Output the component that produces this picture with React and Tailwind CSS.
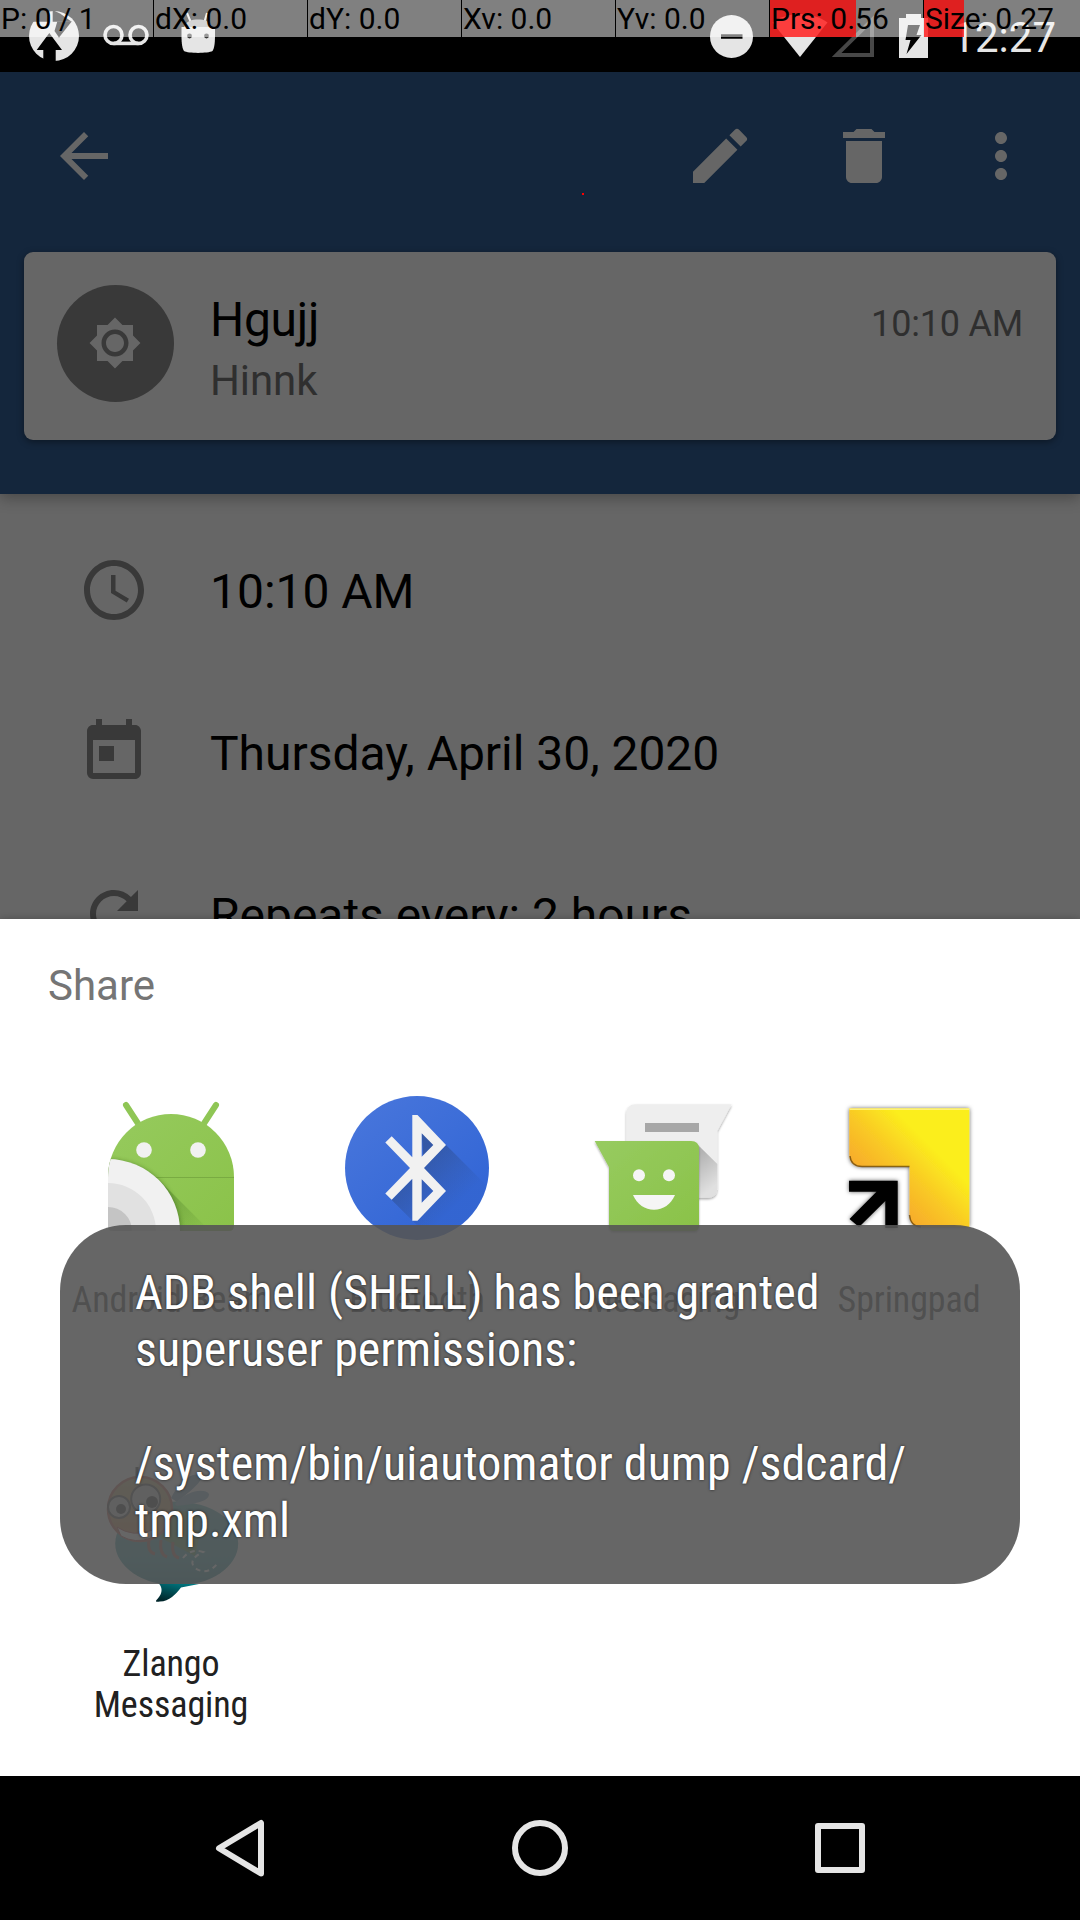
import {
  MdArrowBack,
  MdEdit,
  MdDelete,
  MdMoreVert,
  MdBrightnessHigh,
  MdSchedule,
  MdToday,
  MdRefresh,
} from "react-icons/md";

const pointerCells = [
  { label: "P: 0 / 1", fill: 0 },
  { label: "dX: 0.0", fill: 0 },
  { label: "dY: 0.0", fill: 0 },
  { label: "Xv: 0.0", fill: 0 },
  { label: "Yv: 0.0", fill: 0 },
  { label: "Prs: 0.56", fill: 86 },
  { label: "Size: 0.27", fill: 40 },
];

function PointerBar() {
  return (
    <div className="absolute left-0 top-0 z-20 flex h-[37px] w-[1080px]">
      {pointerCells.map((c, i) => (
        <div
          key={c.label}
          className={"relative h-full shrink-0 bg-white/50 " + (i === 6 ? "w-[156px]" : "mr-px w-[153px]")}
        >
          <div className="h-full bg-[rgba(255,0,0,0.75)]" style={{ width: c.fill }} />
          <span className="absolute left-px top-0 whitespace-pre text-[30px] leading-[37px] text-black">
            {c.label}
          </span>
        </div>
      ))}
    </div>
  );
}

function StatusBar() {
  return (
    <div className="flex h-[72px] shrink-0 items-start bg-black text-[#e5e5e5]">
      <svg className="ml-[29px] h-[72px] w-[50px]" viewBox="29 0 50 72">
        <circle cx="54" cy="36" r="25" fill="#e5e5e5" />
        <path d="M48.300 10V21.700H31L36 13Z" fill="#000" />
        <path d="M52.700 10V21.700H71.700L60 13.500Z" fill="#000" />
        <path d="M57.300 21.500H71.700L59 37.500L54.500 31Z" fill="#000" />
        <path d="M49.300 33L62 50H55.700V62H43.300V50H36.700Z" fill="#000" />
      </svg>
      <svg className="ml-[24px] h-[72px] w-[46px]" viewBox="103 0 46 72" fill="none" stroke="#e5e5e5" strokeWidth="3.600">
        <circle cx="113.500" cy="35" r="8.500" />
        <circle cx="138.500" cy="35" r="8.500" />
        <path d="M113.500 43.400H138.500" />
      </svg>
      <svg className="ml-[31px] h-[72px] w-[36px]" viewBox="180 0 36 72">
        <path d="M187 13L190.500 21.500M207 13L204.500 21.500" stroke="#e5e5e5" strokeWidth="2" />
        <path d="M184 27C186 21 192 19.500 198 19.500S210 21 212 27Z" fill="#a8a8a8" />
        <path d="M181.500 27H215V36C215 44 214 49 212.500 51C208 53.500 188 53.500 184 51C182.500 49 181.500 44 181.500 36Z" fill="#e5e5e5" />
        <circle cx="189.500" cy="36" r="2.400" fill="#333" />
        <circle cx="206.500" cy="36" r="2.400" fill="#333" />
      </svg>
      <svg className="ml-[494px] h-[72px] w-[43px]" viewBox="710 0 43 72">
        <circle cx="731.500" cy="36.500" r="21.500" fill="#e5e5e5" />
        <path d="M721 36.500H742.500" stroke="#000" strokeWidth="4.500" />
      </svg>
      <svg className="ml-[19px] h-[72px] w-[56px]" viewBox="772 0 56 72">
        <path d="M772.500 22.500C788 11 812 11 827.500 22.500L800 57Z" fill="#e5e5e5" />
      </svg>
      <svg className="ml-[4px] h-[72px] w-[44px]" viewBox="832 0 44 72">
        <path d="M836.500 55H872V20Z" fill="none" stroke="#474747" strokeWidth="4" />
      </svg>
      <svg className="ml-[23px] h-[72px] w-[29px]" viewBox="899 0 29 72">
        <path d="M899 18H906V14H921V18H928V58H899Z" fill="#e5e5e5" />
        <path d="M908 25H920L916.500 35H921.500L906.500 54L910.500 40H905.500Z" fill="#000" />
      </svg>
      <div className="ml-auto mr-[24px] pt-[2px] text-[42px] leading-[72px]">12:27</div>
    </div>
  );
}

function Header() {
  return (
    <div className="relative z-10 h-[422px] shrink-0 bg-[#14263c] shadow-[0_4px_14px_rgba(0,0,0,0.3)]">
      <div className="flex h-[168px] items-center text-[72px] text-[#666]">
        <MdArrowBack className="ml-[48px]" />
        <MdEdit className="ml-auto mr-[72px]" />
        <MdDelete className="mr-[65px]" />
        <MdMoreVert className="mr-[43px]" />
      </div>
      <div className="mx-6 mt-3 flex h-[188px] rounded-[9px] bg-[#666] shadow-[0_2px_7px_rgba(0,0,0,0.4)]">
        <div className="ml-[33px] mt-[33px] flex h-[117px] w-[117px] items-center justify-center rounded-full bg-[#393939] pb-[2px] pr-[2px] text-[54px] text-[#666]">
          <MdBrightnessHigh />
        </div>
        <div className="ml-[36px] pt-[38px]">
          <div className="text-[48px] leading-[60px] tracking-[-0.3px] text-black">Hgujj</div>
          <div className="pt-px text-[42px] leading-[60px] tracking-[-0.1px] text-[#2f2f2f]">Hinnk</div>
        </div>
        <div className="ml-auto mr-[33px] pt-[42px] text-[36px] leading-[60px] tracking-[-0.2px] text-[#2f2f2f]">
          10:10 AM
        </div>
      </div>
    </div>
  );
}

function DetailRow({ icon: Icon, children }) {
  return (
    <div className="flex h-[162px] shrink-0 items-center">
      <Icon className="ml-[78px] text-[72px] text-[#393939]" />
      <span className="ml-[60px] pt-1 text-[48px] leading-[56px] tracking-[-0.03px] text-black">{children}</span>
    </div>
  );
}

function BeamIcon() {
  return (
    <svg className="h-[144px] w-[144px]" viewBox="0 0 144 144">
      <defs>
        <linearGradient id="beamGreen" x1="0" y1="0" x2="1" y2="1">
          <stop offset="0" stopColor="#97cb60" />
          <stop offset="1" stopColor="#8ac248" />
        </linearGradient>
        <linearGradient id="beamShade" gradientUnits="userSpaceOnUse" x1="60" y1="90" x2="104" y2="134">
          <stop offset="0" stopColor="#3d6b1f" stopOpacity="0.4" />
          <stop offset="1" stopColor="#3d6b1f" stopOpacity="0.04" />
        </linearGradient>
        <clipPath id="beamBody">
          <path d="M9 81A63 63 0 0 1 135 81V130Q135 135 130 135H14Q9 135 9 130Z" />
        </clipPath>
        <filter id="beamBlur" x="-20%" y="-20%" width="140%" height="140%">
          <feGaussianBlur stdDeviation="2.200" />
        </filter>
      </defs>
      <path d="M27 9L40 29M117 9L104 29" stroke="#8fc655" strokeWidth="6" strokeLinecap="round" />
      <g clipPath="url(#beamBody)">
        <rect width="144" height="144" fill="url(#beamGreen)" />
        <path d="M9 81.500H135" stroke="#79ab42" strokeWidth="1.200" />
        <path d="M60 84L120 144H40Z" fill="url(#beamShade)" />
        <circle cx="9.500" cy="136" r="72.500" fill="#3d6b1f" opacity="0.6" filter="url(#beamBlur)" />
        <circle cx="9" cy="135" r="72" fill="#f1f1f1" />
        <circle cx="9" cy="135" r="48" fill="#e1e1e1" />
        <circle cx="9" cy="135" r="24" fill="#c4c4c4" />
      </g>
      <circle cx="45" cy="54" r="7.800" fill="#f1f1f1" />
      <circle cx="99" cy="54" r="7.800" fill="#f1f1f1" />
    </svg>
  );
}

function BluetoothIcon() {
  return (
    <svg className="h-[144px] w-[144px]" viewBox="0 0 144 144">
      <defs>
        <linearGradient id="btBlue" x1="0.100" y1="0.100" x2="0.700" y2="0.800">
          <stop offset="0" stopColor="#4775db" />
          <stop offset="1" stopColor="#3467d6" />
        </linearGradient>
        <linearGradient id="btShade" gradientUnits="userSpaceOnUse" x1="66" y1="66" x2="110" y2="110">
          <stop offset="0" stopColor="#263a60" stopOpacity="0.42" />
          <stop offset="0.550" stopColor="#263a60" stopOpacity="0.2" />
          <stop offset="1" stopColor="#263a60" stopOpacity="0.04" />
        </linearGradient>
        <clipPath id="btClip">
          <circle cx="72" cy="72" r="72" />
        </clipPath>
      </defs>
      <circle cx="72" cy="72" r="72" fill="url(#btBlue)" />
      <path
        clipPath="url(#btClip)"
        d="M76.700 37.300L101 49L154 102V160H103L46.700 104L67.300 83L79 72Z"
        fill="url(#btShade)"
      />
      <path
        fill="#f1f1f1"
        fillRule="evenodd"
        d="M67.300 19H72.500L101 49L79 72L101 95L72.500 124.700H67.300V82.700L46.700 103.700L40.300 97.500L65 72L40.300 46.500L46.700 40.300L67.300 61.300ZM76.700 37.300V60.700L88.300 49ZM76.700 83.300V106.700L88.300 95Z"
      />
    </svg>
  );
}

function MessagingIcon() {
  return (
    <svg className="h-[144px] w-[144px]" viewBox="0 0 144 144">
      <defs>
        <linearGradient id="msgGreen" x1="0" y1="0" x2="1" y2="1">
          <stop offset="0" stopColor="#97cb60" />
          <stop offset="1" stopColor="#8ac248" />
        </linearGradient>
        <linearGradient id="msgShade" gradientUnits="userSpaceOnUse" x1="106" y1="60" x2="128" y2="86">
          <stop offset="0" stopColor="#000" stopOpacity="0.25" />
          <stop offset="1" stopColor="#000" stopOpacity="0.06" />
        </linearGradient>
        <filter id="msgShadow" x="-10%" y="-10%" width="120%" height="125%">
          <feDropShadow dx="0" dy="1.500" stdDeviation="1.200" floodOpacity="0.35" />
        </filter>
      </defs>
      <path
        filter="url(#msgShadow)"
        d="M45 8.300H140.700L126.300 35V92Q126.300 101.700 117 101.700H45Q35.300 101.700 35.300 92V18Q35.300 8.300 45 8.300Z"
        fill="#eee"
      />
      <rect x="54" y="27" width="54" height="9" fill="#a7a7a7" />
      <path d="M106 48L126.300 68V92Q126.300 101.700 117 101.700H106Z" fill="url(#msgShade)" />
      <path
        filter="url(#msgShadow)"
        d="M3.700 45H100Q108 45 108 53V130Q108 135 103 135H23Q18 135 18 130V71.300Z"
        fill="url(#msgGreen)"
      />
      <circle cx="48" cy="79.300" r="6" fill="#f5f5f5" />
      <circle cx="78" cy="79.300" r="6" fill="#f5f5f5" />
      <path d="M42 99H84C80 108.500 72 113.700 63 113.700S46 108.500 42 99Z" fill="#f5f5f5" />
    </svg>
  );
}

function SpringpadIcon() {
  return (
    <svg className="h-[144px] w-[144px]" viewBox="0 0 144 144">
      <defs>
        <linearGradient id="spYellow" gradientUnits="userSpaceOnUse" x1="36" y1="92" x2="86" y2="42">
          <stop offset="0" stopColor="#f7a92c" />
          <stop offset="0.500" stopColor="#f9c825" />
          <stop offset="1" stopColor="#fbee1d" />
        </linearGradient>
        <filter id="spShadow" x="-15%" y="-15%" width="130%" height="130%">
          <feDropShadow dx="0" dy="0" stdDeviation="2.200" floodOpacity="0.65" />
        </filter>
      </defs>
      <path
        filter="url(#spShadow)"
        d="M12.300 12.500H132.300V131H84Q72.500 131 72.500 119V71H25Q12.300 70.500 12.300 58Z"
        fill="url(#spYellow)"
      />
      <path d="M13 60Q14 70.500 25 70.500H72.500M72.500 119Q73.500 130.500 84 131" fill="none" stroke="#5a3a08" strokeOpacity="0.7" strokeWidth="1.400" />
      <path d="M12.500 13.200H132" stroke="#fff27a" strokeWidth="1.500" />
      <path
        filter="url(#spShadow)"
        d="M12 84.700H60.700V132H48.300V105L22 131L12.500 123L39.500 95.700H12Z"
        fill="#040606"
      />
    </svg>
  );
}

function ZlangoIcon() {
  return (
    <svg className="h-[144px] w-[144px]" viewBox="0 0 144 144">
      <defs>
        <linearGradient id="zlTeal" x1="0" y1="0" x2="0" y2="1">
          <stop offset="0" stopColor="#3aa0a8" />
          <stop offset="0.700" stopColor="#1c8c98" />
          <stop offset="1" stopColor="#006d78" />
        </linearGradient>
        <linearGradient id="zlTail" x1="0.800" y1="0" x2="0.300" y2="1">
          <stop offset="0" stopColor="#00818a" />
          <stop offset="1" stopColor="#00262b" />
        </linearGradient>
        <linearGradient id="zlHead" x1="0" y1="0" x2="0" y2="1">
          <stop offset="0" stopColor="#b5a560" />
          <stop offset="1" stopColor="#c8702c" />
        </linearGradient>
      </defs>
      <ellipse cx="77.700" cy="83.500" rx="61.500" ry="42" fill="url(#zlTeal)" />
      <path d="M58 122C66 128 62 136 57.500 140C56 142 58 142 61 141.500C70 141.500 77 134 82 127.500L100 124Z" fill="url(#zlTail)" />
      <path d="M72 38C80 22 94 10 102 16C104 22 90 32 78 42Z" fill="#5f8fb0" />
      <path d="M76 44C88 30 106 28 110 34C110 42 94 44 78 46Z" fill="#6f9fbc" />
      <path d="M60 50L104 52L92 70L102 70L96 96L62 78Z" fill="#3f8a3f" />
      <path d="M50 80Q48 92 56 94M62 80Q60 94 68 97M74 82Q72 96 80 98" fill="none" stroke="#a04538" strokeWidth="3" />
      <circle cx="41" cy="49" r="32" fill="url(#zlHead)" stroke="#b84a38" strokeWidth="2.500" />
      <path d="M38 18V7" stroke="#222" strokeWidth="3" />
      <circle cx="20" cy="47" r="11" fill="#c4c4c4" stroke="#333" strokeWidth="2" />
      <circle cx="46.700" cy="39" r="14.500" fill="#c4c4c4" stroke="#333" strokeWidth="2" />
      <circle cx="22" cy="49" r="5" fill="#111" />
      <circle cx="53" cy="42" r="6" fill="#111" />
      <path d="M18 67Q34 78 54 70L52 78Q36 84 22 76Z" fill="#fff" stroke="#a33" strokeWidth="1" />
      <path d="M84 98Q92 88 104 92Q88 100 96 108Q108 116 118 104" fill="none" stroke="#fff" strokeWidth="2" strokeDasharray="5 4" />
    </svg>
  );
}

const targets = [
  { name: "Android Beam", icon: BeamIcon },
  { name: "Bluetooth", icon: BluetoothIcon },
  { name: "Messaging", icon: MessagingIcon },
  { name: "Springpad", icon: SpringpadIcon },
  { name: "Zlango Messaging", icon: ZlangoIcon },
];

function ShareSheet() {
  return (
    <div className="relative z-10 h-[857px] shrink-0 bg-white shadow-[0_0_8px_rgba(0,0,0,0.25)]">
      <div className="flex h-[133px] items-center pl-[48px] text-[42px] text-[#757575]">Share</div>
      <div className="grid grid-cols-4 px-[48px]">
        {targets.map(({ name, icon: Icon }) => (
          <div key={name} className="flex h-[364px] flex-col items-center pt-[44px]">
            <Icon />
            <div className="mt-[40px] w-[210px] text-center text-[36px] leading-[41px] tracking-[-0.1px] text-[#212121] [font-family:'Roboto_Condensed',Roboto,sans-serif]">
              {name}
            </div>
          </div>
        ))}
      </div>
    </div>
  );
}

function Toast() {
  return (
    <div className="absolute left-[60px] top-[1225px] z-20 h-[359px] w-[960px] rounded-[66px] bg-[rgba(85,85,85,0.9)] pl-[75px] pt-[39px] text-[48px] leading-[57px] text-white [font-family:'Roboto_Condensed',Roboto,sans-serif] [text-shadow:0_0_3px_rgba(0,0,0,0.73)]">
      ADB shell (SHELL) has been granted
      <br />
      superuser permissions:
      <br />
      <br />
      /system/bin/uiautomator dump /sdcard/
      <br />
      tmp.xml
    </div>
  );
}

function NavBar() {
  return (
    <div className="relative z-10 flex h-[144px] shrink-0 items-center bg-black">
      <svg className="ml-[212px] h-[60px] w-[56px]" viewBox="212 1818 56 60" fill="none" stroke="#e5e5e5" strokeWidth="6" strokeLinejoin="round">
        <path d="M261 1823V1873.500L219 1848.300Z" />
      </svg>
      <svg className="ml-[244px] h-[60px] w-[56px]" viewBox="512 1818 56 60" fill="none" stroke="#e5e5e5" strokeWidth="6">
        <circle cx="540" cy="1848" r="25" />
      </svg>
      <svg className="ml-[246px] h-[60px] w-[52px]" viewBox="814 1818 52 60" fill="none" stroke="#e5e5e5" strokeWidth="6" strokeLinejoin="round">
        <rect x="818" y="1826" width="44" height="44" />
      </svg>
    </div>
  );
}

export default function App() {
  return (
    <div className="relative flex h-[1920px] w-[1080px] flex-col overflow-hidden bg-black [font-family:Roboto,sans-serif]">
      <StatusBar />
      <div className="flex h-[847px] shrink-0 flex-col overflow-hidden bg-[#666]">
        <Header />
        <div className="flex flex-col pt-[15px]">
          <DetailRow icon={MdSchedule}>10:10 AM</DetailRow>
          <DetailRow icon={MdToday}>Thursday, April 30, 2020</DetailRow>
          <DetailRow icon={MdRefresh}>Repeats every: 2 hours</DetailRow>
        </div>
      </div>
      <ShareSheet />
      <NavBar />
      <PointerBar />
      <Toast />
      <div className="absolute left-[582px] top-[193px] z-20 h-[2px] w-[2px] bg-[#ff0000]" />
    </div>
  );
}
